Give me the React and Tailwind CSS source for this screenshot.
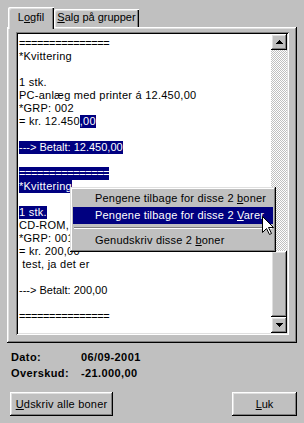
import React from 'react';

const raised = 'shadow-[inset_-1px_-1px_#000,inset_1px_1px_#fff,inset_-2px_-2px_#808080,inset_2px_2px_#dfdfdf]';
const menuEdge = 'shadow-[inset_-1px_-1px_#000,inset_1px_1px_#dfdfdf,inset_-2px_-2px_#808080,inset_2px_2px_#fff]';
const sunken = 'shadow-[inset_1px_1px_#808080,inset_-1px_-1px_#fff,inset_2px_2px_#000,inset_-2px_-2px_#dfdfdf]';

function Sel({ children }) {
    return <span className="inline-block h-[13px] bg-[#000080] text-white">{children}</span>;
}

// the original font has narrow "=" and "-" glyphs, so those lines get their own spacing
const spacing = {
    text: 'tracking-[0.25px]',
    arrow: 'tracking-normal',
    rule: 'tracking-[-0.4px]',
};

function Line({ children, kind = 'text' }) {
    return <div className={`h-[13px] leading-[13px] whitespace-pre ${spacing[kind]}`}>{children}</div>;
}

function Arrow({ up }) {
    return (
        <svg width="7" height="4" viewBox="0 0 7 4" shapeRendering="crispEdges">
            {up ? <path d="M3 0h1v1h1v1h1v1h1v1H0V3h1V2h1V1h1z" fill="#000" /> : <path d="M0 0h7v1H6v1H5v1H4v1H3V3H2V2H1V1H0z" fill="#000" />}
        </svg>
    );
}

export default function App() {
    return (
        <div className="relative w-[304px] h-[423px] overflow-hidden bg-[#c0c0c0] pt-[7px] font-['Liberation_Sans',Arial,sans-serif] text-[11px] text-black">
            <div className="px-[7px]">
                {/* tabs */}
                <div className="flex items-end h-[20px] pl-[1px]">
                    <div className="relative z-10 -mb-[2px] h-[22px] w-[46px] rounded-tl-[2px] bg-[#c0c0c0] pt-[4px] text-center leading-[13px] shadow-[inset_1px_1px_#fff,inset_-1px_0_#000,inset_-2px_0_#808080,inset_2px_2px_#dfdfdf]">
                        L<u>o</u>gfil
                    </div>
                    <div className="h-[18px] w-[85px] rounded-tl-[2px] pt-[2px] text-center leading-[13px] shadow-[inset_1px_1px_#fff,inset_-1px_0_#000,inset_-2px_0_#808080,inset_2px_2px_#dfdfdf]">
                        <u>S</u>alg på grupper
                    </div>
                </div>

                {/* panel */}
                <div className={`h-[316px] w-[290px] pt-[5px] pl-[9px] ${raised}`}>
                    <div className={`flex h-[303px] w-[273px] bg-white p-[2px] ${sunken}`}>
                        <div className="flex-1 overflow-hidden pl-[1px] pt-[3px]">
                            <Line kind="rule">===============</Line>
                            <Line>*Kvittering</Line>
                            <Line> </Line>
                            <Line>1 stk.</Line>
                            <Line>PC-anlæg med printer á 12.450,00</Line>
                            <Line>*GRP: 002</Line>
                            <Line>= kr. 12.450<Sel>,00</Sel></Line>
                            <Line> </Line>
                            <Line kind="arrow"><Sel>---&gt; Betalt: 12.450,00</Sel></Line>
                            <Line> </Line>
                            <Line kind="rule"><Sel>===============</Sel></Line>
                            <Line><Sel>*Kvittering</Sel></Line>
                            <Line> </Line>
                            <Line><Sel>1 stk.</Sel></Line>
                            <Line>CD-ROM, rød 52x á 200,00</Line>
                            <Line>*GRP: 001</Line>
                            <Line>= kr. 200,00</Line>
                            <Line> test, ja det er</Line>
                            <Line> </Line>
                            <Line kind="arrow">---&gt; Betalt: 200,00</Line>
                            <Line> </Line>
                            <Line kind="rule">===============</Line>
                        </div>
                        {/* scrollbar */}
                        <div className="flex w-[16px] flex-col">
                            <div className={`flex h-[16px] items-center justify-center bg-[#c0c0c0] ${raised}`}>
                                <Arrow up />
                            </div>
                            <div className="h-[201px] bg-[image:repeating-conic-gradient(#c0c0c0_0%_25%,#ffffff_0%_50%)] bg-[length:2px_2px]" />
                            <div className={`h-[66px] bg-[#c0c0c0] ${raised}`} />
                            <div className={`flex h-[16px] items-center justify-center bg-[#c0c0c0] ${raised}`}>
                                <Arrow />
                            </div>
                        </div>
                    </div>
                </div>
            </div>

            {/* info */}
            <div className="mt-[6px] pl-[11px] font-bold leading-[16px] tracking-[0.4px]">
                <div className="flex">
                    <span className="w-[70px]">Dato:</span>
                    <span>06/09-2001</span>
                </div>
                <div className="flex">
                    <span className="w-[70px]">Overskud:</span>
                    <span>-21.000,00</span>
                </div>
            </div>

            {/* buttons */}
            <div className="mt-[11px] flex justify-between pl-[10px] pr-[7px]">
                <button className={`h-[24px] w-[103px] bg-[#c0c0c0] tracking-[0.2px] ${raised}`}>
                    <u>U</u>dskriv alle boner
                </button>
                <button className={`h-[24px] w-[65px] bg-[#c0c0c0] ${raised}`}>
                    <u>L</u>uk
                </button>
            </div>

            {/* context menu */}
            <div className={`absolute left-[70px] top-[187px] z-20 w-[206px] bg-[#c0c0c0] p-[3px] tracking-[0.2px] ${menuEdge}`}>
                <div className="h-[17px] pl-[22px] leading-[17px] whitespace-pre">Pengene tilbage for disse 2 <u>b</u>oner</div>
                <div className="h-[17px] bg-[#000080] pl-[22px] leading-[17px] text-white whitespace-pre">Pengene tilbage for disse 2 <u>V</u>arer</div>
                <div className="flex h-[8px] flex-col justify-center px-[1px]">
                    <div className="h-px bg-[#808080]" />
                    <div className="h-px bg-white" />
                </div>
                <div className="h-[17px] pl-[22px] leading-[17px] whitespace-pre">Genudskriv disse 2 <u>b</u>oner</div>
            </div>

            {/* mouse cursor */}
            <svg className="absolute left-[262px] top-[216px] z-30" width="13" height="20" viewBox="0 0 13 20">
                <path d="M0.5 0.5 L0.5 16.5 L4.5 12.5 L7.5 18.5 L9.5 17.5 L6.5 11.5 L11.5 11.5 Z" fill="#fff" stroke="#000" strokeWidth="1" />
            </svg>
        </div>
    );
}
